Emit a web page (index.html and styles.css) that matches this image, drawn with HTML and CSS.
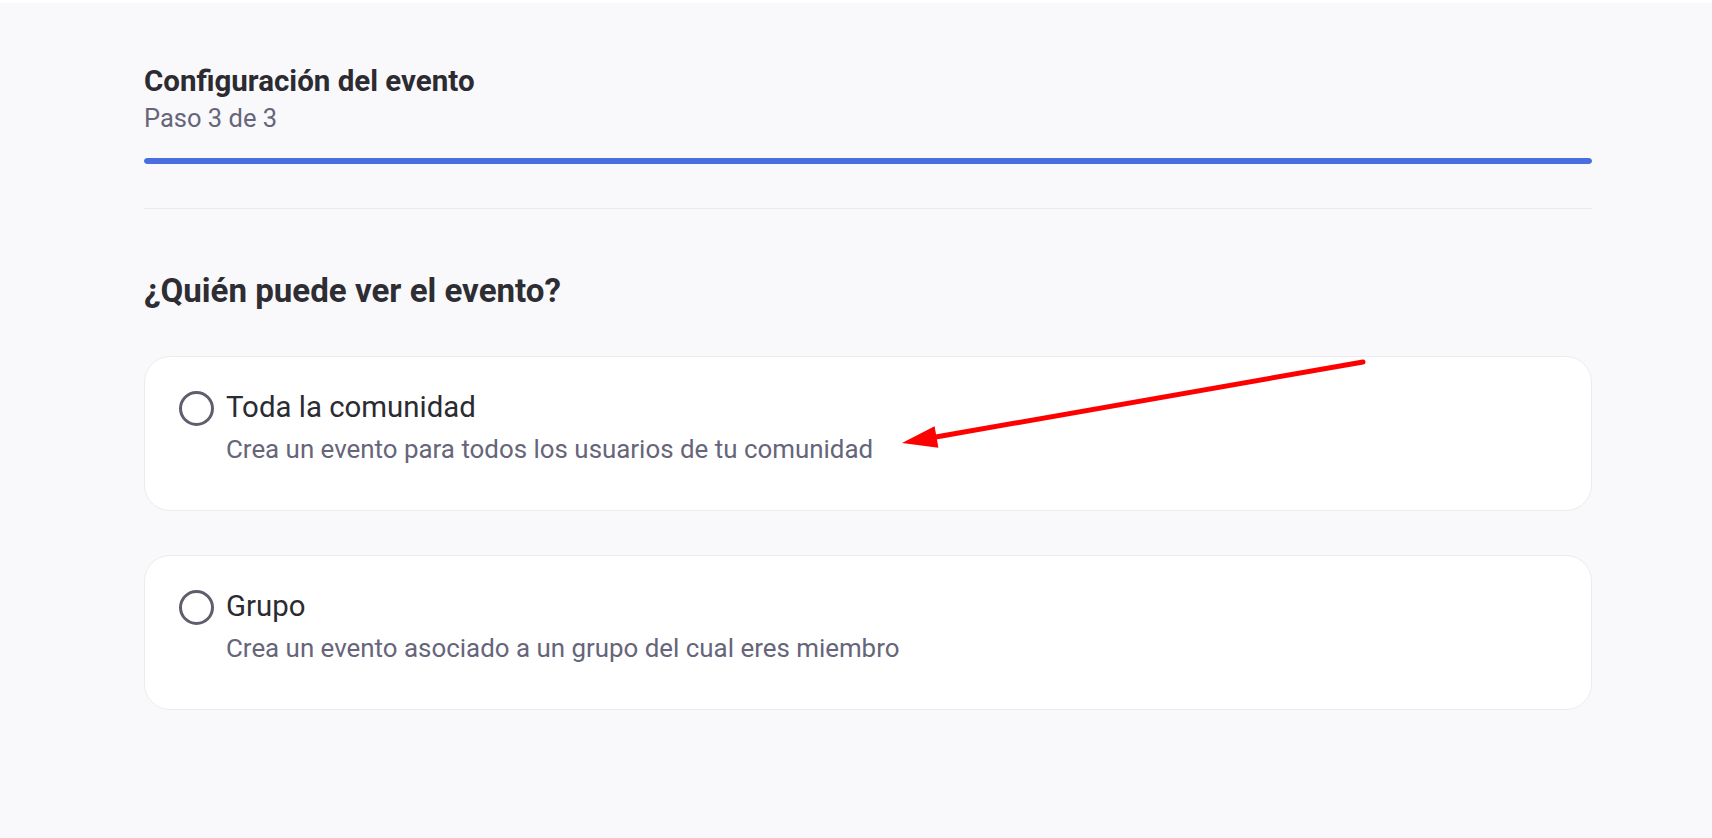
FILE: index.html
```html
<!DOCTYPE html>
<html lang="es">
<head>
<meta charset="utf-8">
<title>Configuración del evento</title>
<link rel="stylesheet" href="styles.css">
</head>
<body>
<div class="topstrip"></div>
<main class="page">
  <header class="step-header">
    <h1 class="step-title">Configuración del evento</h1>
    <p class="step-sub">Paso 3 de 3</p>
    <div class="progress"><div class="progress-fill" style="width:100%"></div></div>
  </header>
  <hr class="divider">
  <section class="question">
    <h2 class="question-title">¿Quién puede ver el evento?</h2>
    <div class="options">
      <label class="option">
        <span class="radio"></span>
        <span class="option-text">
          <span class="option-title">Toda la comunidad</span>
          <span class="option-desc">Crea un evento para todos los usuarios de tu comunidad</span>
        </span>
      </label>
      <label class="option">
        <span class="radio"></span>
        <span class="option-text">
          <span class="option-title">Grupo</span>
          <span class="option-desc">Crea un evento asociado a un grupo del cual eres miembro</span>
        </span>
      </label>
    </div>
  </section>
</main>
<svg class="annotation" width="1712" height="838" viewBox="0 0 1712 838" aria-hidden="true">
  <line x1="1363" y1="362" x2="933" y2="437.5" stroke="#ff0000" stroke-width="5" stroke-linecap="round"/>
  <polygon points="902,443 934.6,426.2 938.4,447.8" fill="#ff0000"/>
</svg>
</body>
</html>
```

FILE: styles.css
```css
* { box-sizing: border-box; }
html, body { margin: 0; padding: 0; }
body {
  background: #f9f9fb;
  font-family: Roboto, "Liberation Sans", Arial, sans-serif;
  color: #2c2c32;
  width: 1712px;
  height: 838px;
  overflow: hidden;
  position: relative;
}
.topstrip { height: 3px; background: #ffffff; }
.page {
  padding: 60px 120px 0 144px;
}
.step-title {
  margin: 0;
  font-size: 29.5px;
  line-height: 36px;
  font-weight: 700;
  color: #2b2b31;
}
.step-sub {
  margin: 3px 0 0;
  font-size: 25.5px;
  line-height: 32px;
  color: #66657a;
}
.progress {
  margin-top: 24px;
  height: 6px;
  border-radius: 3px;
  background: #e6e8f2;
  overflow: hidden;
}
.progress-fill {
  height: 100%;
  background: #4a6ee0;
  border-radius: 3px;
}
.divider {
  margin: 44px 0 0;
  border: 0;
  height: 1px;
  background: #e9e9ee;
}
.question-title {
  margin: 62px 0 0;
  font-size: 33.1px;
  line-height: 40px;
  font-weight: 700;
  color: #2d2d33;
}
.options {
  margin-top: 45px;
  display: flex;
  flex-direction: column;
  gap: 44px;
}
.option {
  display: flex;
  align-items: flex-start;
  gap: 12px;
  background: #ffffff;
  border: 1px solid #ececf0;
  border-radius: 26px;
  padding: 32px 34px 0;
  height: 155px;
}
.radio {
  flex: none;
  width: 35px;
  height: 35px;
  margin-top: 2px;
  border: 3px solid #5f5e6e;
  border-radius: 50%;
  background: #fff;
}
.option-text { display: flex; flex-direction: column; }
.option-title {
  font-size: 29.4px;
  line-height: 36px;
  color: #2b2b31;
}
.option-desc {
  margin-top: 8px;
  font-size: 25.9px;
  line-height: 32px;
  color: #66657a;
}
.annotation {
  position: absolute;
  left: 0;
  top: 0;
  pointer-events: none;
}
```
